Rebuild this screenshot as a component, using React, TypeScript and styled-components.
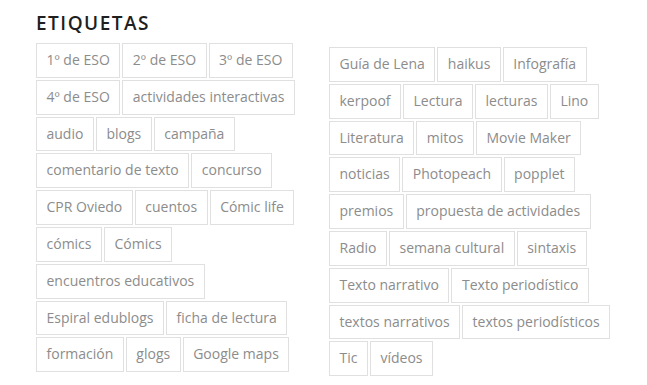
import React from "react";
import styled, { createGlobalStyle } from "styled-components";

const GlobalStyle = createGlobalStyle`
  html, body {
    margin: 0;
    padding: 0;
    background: #ffffff;
  }
  body {
    font-family: "Open Sans", "Liberation Sans", Arial, sans-serif;
  }
`;

const Page = styled.div`
  width: 647px;
  height: 385px;
  box-sizing: border-box;
  padding: 12px 0 0 36px;
  overflow: hidden;
`;

const Heading = styled.h3`
  margin: 0 0 8px;
  font-size: 19px;
  line-height: 23px;
  font-weight: 600;
  letter-spacing: 1.5px;
  color: #1f1f1f;
  text-transform: uppercase;
`;

const Columns = styled.div`
  display: grid;
  grid-template-columns: 285px 285px;
  column-gap: 8px;
  align-items: start;
`;

const Cloud = styled.div<{ $offset?: number }>`
  display: flex;
  flex-wrap: wrap;
  gap: 2px;
  padding-top: ${(p) => p.$offset ?? 0}px;
`;

const Tag = styled.a`
  display: inline-block;
  box-sizing: border-box;
  padding: 7px 9.5px;
  border: 1px solid #e0e0e0;
  font-size: 14px;
  line-height: 18.8px;
  color: #8c8c8c;
  text-decoration: none;
  white-space: nowrap;
  cursor: pointer;
`;

const left = [
  "1º de ESO",
  "2º de ESO",
  "3º de ESO",
  "4º de ESO",
  "actividades interactivas",
  "audio",
  "blogs",
  "campaña",
  "comentario de texto",
  "concurso",
  "CPR Oviedo",
  "cuentos",
  "Cómic life",
  "cómics",
  "Cómics",
  "encuentros educativos",
  "Espiral edublogs",
  "ficha de lectura",
  "formación",
  "glogs",
  "Google maps",
];

const right = [
  "Guía de Lena",
  "haikus",
  "Infografía",
  "kerpoof",
  "Lectura",
  "lecturas",
  "Lino",
  "Literatura",
  "mitos",
  "Movie Maker",
  "noticias",
  "Photopeach",
  "popplet",
  "premios",
  "propuesta de actividades",
  "Radio",
  "semana cultural",
  "sintaxis",
  "Texto narrativo",
  "Texto periodístico",
  "textos narrativos",
  "textos periodísticos",
  "Tic",
  "vídeos",
];

export default function App() {
  return (
    <>
      <GlobalStyle />
      <Page>
        <Heading>Etiquetas</Heading>
        <Columns>
          <Cloud>
            {left.map((t) => (
              <Tag key={t}>{t}</Tag>
            ))}
          </Cloud>
          <Cloud $offset={4}>
            {right.map((t) => (
              <Tag key={t}>{t}</Tag>
            ))}
          </Cloud>
        </Columns>
      </Page>
    </>
  );
}
